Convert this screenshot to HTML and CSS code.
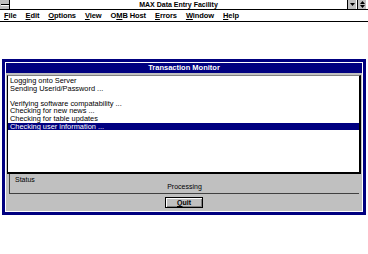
FILE: index.html
```html
<!DOCTYPE html>
<html lang="en">
  <head>
    <meta charset="UTF-8" />
    <title>MAX Data Entry Facility</title>
    <link rel="stylesheet" href="styles.css">
  </head>
  <body>

    <div class="titlebar">
      <div class="sysmenu"><span></span></div>
      <div class="app-title">MAX Data Entry Facility</div>
      <div class="tb-button">
        <svg width="7" height="7" viewBox="0 0 7 7"><path d="M1 2h5L3.5 5z" fill="#000"/></svg>
      </div>
      <div class="tb-button">
        <svg width="7" height="7" viewBox="0 0 7 7"><path d="M3.5 0L6 3H1zM3.5 7L1 4h5z" fill="#000"/></svg>
      </div>
    </div>

    <div class="menubar">
      <span><u>F</u>ile</span>
      <span><u>E</u>dit</span>
      <span><u>O</u>ptions</span>
      <span><u>V</u>iew</span>
      <span>O<u>M</u>B Host</span>
      <span><u>E</u>rrors</span>
      <span><u>W</u>indow</span>
      <span><u>H</u>elp</span>
    </div>

    <div class="dialog">
      <div class="dialog-inner">
        <div class="dialog-title">Transaction Monitor</div>

        <div class="log-list">
          <div class="log-line">Logging onto Server</div>
          <div class="log-line">Sending Userid/Password ...</div>
          <div class="log-line">&nbsp;</div>
          <div class="log-line">Verifying software compatability ...</div>
          <div class="log-line">Checking for new news ...</div>
          <div class="log-line">Checking for table updates</div>
          <div class="log-line selected">Checking user information ...</div>
        </div>

        <div class="status-box">
          <div class="status-label">Status</div>
          <div class="status-value">Processing</div>
        </div>

        <div class="button-row">
          <button class="dlg-button"><u>Q</u>uit</button>
        </div>
      </div>
    </div>

  </body>
</html>
```

FILE: styles.css
```css
body {
  margin: 0;
  width: 368px;
  height: 254px;
  overflow: hidden;
  background: #fff;
  font-family: "Liberation Sans", Arial, sans-serif;
  color: #000;
}

.titlebar {
  display: flex;
  height: 9px;
  border-bottom: 1px solid #000;
  padding-right: 2px;
}
.sysmenu {
  width: 9px;
  height: 9px;
  background: #c0c0c0;
  border-right: 1px solid #000;
  display: flex;
  align-items: center;
  justify-content: center;
}
.sysmenu span {
  width: 8px;
  height: 1px;
  background: #000;
  border-bottom: 1px solid #fff;
}
.app-title {
  flex: 1;
  text-align: center;
  font-size: 7px;
  font-weight: bold;
  line-height: 9px;
}
.tb-button {
  width: 8px;
  height: 9px;
  background: #c0c0c0;
  border-left: 1px solid #000;
  display: flex;
  align-items: center;
  justify-content: center;
}
.tb-button + .tb-button {
  margin-left: 1px;
}

.menubar {
  display: flex;
  gap: 9px;
  height: 11px;
  padding-left: 4px;
  border-bottom: 1px solid #000;
  font-size: 7.5px;
  font-weight: bold;
  line-height: 12px;
  letter-spacing: -0.1px;
}

.dialog {
  margin: 37px 0 0 2px;
  width: 358px;
  height: 150px;
  border: 3px solid #000080;
}
.dialog-inner {
  height: 148px;
  border: 1px solid #fff;
  background: #c0c0c0;
  display: flex;
  flex-direction: column;
}
.dialog-title {
  height: 10px;
  background: #000080;
  color: #fff;
  text-align: center;
  font-size: 7.5px;
  font-weight: bold;
  line-height: 10px;
}

.log-list {
  margin: 2px 1px 0 1px;
  height: 95px;
  background: #fff;
  border-top: 1px solid #808080;
  border-left: 1px solid #000;
  border-right: 2px solid #000;
  border-bottom: 2px solid #000;
  padding-top: 1px;
  font-size: 7.4px;
}
.log-line {
  line-height: 7.6px;
  padding-left: 2px;
  white-space: nowrap;
}
.log-line.selected {
  background: #000080;
  color: #fff;
}

.status-box {
  margin: 0 3px;
  height: 19px;
  border-left: 1px solid #404040;
  border-bottom: 1px solid #404040;
  font-size: 7px;
}
.status-label {
  padding: 2px 0 0 5px;
  line-height: 7px;
}
.status-value {
  text-align: center;
  line-height: 8px;
}

.button-row {
  display: flex;
  justify-content: center;
  padding-top: 3px;
}
.dlg-button {
  width: 38px;
  height: 11px;
  padding: 0;
  background: #c0c0c0;
  border: 1px solid #000;
  box-shadow: inset 1px 1px 0 #fff, inset -1px -1px 0 #808080;
  font-family: "Liberation Sans", Arial, sans-serif;
  font-size: 7px;
  font-weight: bold;
  line-height: 9px;
}
```
